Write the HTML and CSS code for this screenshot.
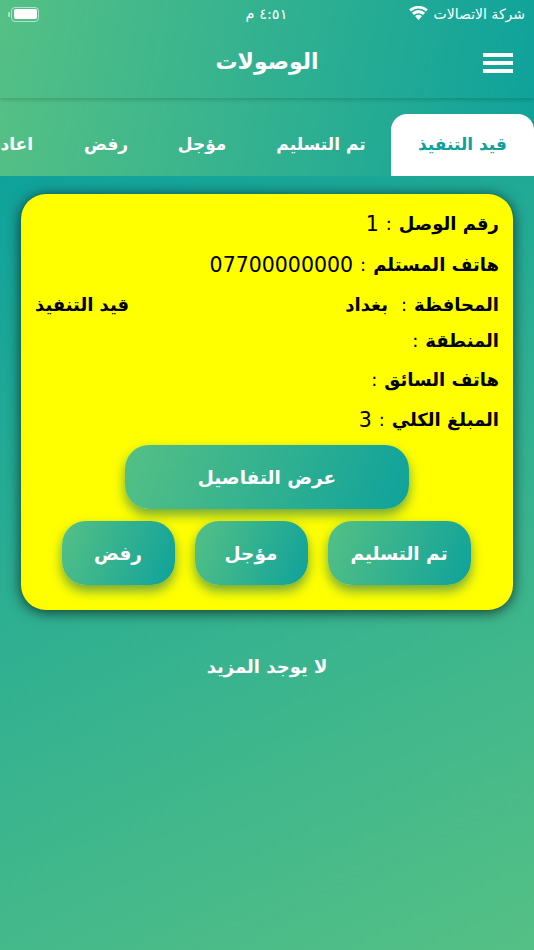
FILE: index.html
```html
<!DOCTYPE html>
<html lang="ar" dir="rtl">
<head>
<meta charset="utf-8">
<title>الوصولات</title>
<link rel="stylesheet" href="styles.css">
</head>
<body>
<div class="top">
  <div class="status">
    <div class="carrier">
      <span>شركة الاتصالات</span>
      <svg class="wifi" viewBox="0 0 20 15" width="19" height="14"><path d="M10 15 6.4 11a5 5 0 0 1 7.2 0z" fill="#fff"/><path d="M5.2 9.7 2.9 7.1a10.4 10.4 0 0 1 14.2 0l-2.3 2.6a7 7 0 0 0-9.6 0z" fill="#fff"/><path d="M1.9 5.9 0 3.6a15 15 0 0 1 20 0l-1.9 2.3a12 12 0 0 0-16.2 0z" fill="#fff"/></svg>
    </div>
    <div class="clock">٤:٥١ م</div>
    <div class="battery"><span class="cap"></span><span class="shell"><span class="level"></span></span></div>
  </div>
  <header class="bar">
    <button class="burger" aria-label="menu"><span></span><span></span><span></span></button>
    <h1>الوصولات</h1>
  </header>
</div>
<nav class="tabs">
  <a class="tab active">قيد التنفيذ</a>
  <a class="tab t2">تم التسليم</a>
  <a class="tab t3">مؤجل</a>
  <a class="tab t4">رفض</a>
  <a class="tab t5">اعادة</a>
</nav>
<main>
  <section class="card">
    <p class="row"><b>رقم الوصل</b><i>:</i><span>1</span></p>
    <p class="row"><b>هاتف المستلم</b><i>:</i><span>07700000000</span></p>
    <div class="row split"><p class="inner"><b>المحافظة</b><i>:</i><b class="thin">بغداد</b></p><b class="state">قيد التنفيذ</b></div>
    <p class="row tight"><b>المنطقة</b><i>:</i></p>
    <p class="row"><b>هاتف السائق</b><i>:</i></p>
    <p class="row"><b>المبلغ الكلي</b><i>:</i><span>3</span></p>
    <div class="actions">
      <button class="btn wide">عرض التفاصيل</button>
      <div class="trio">
        <button class="btn deliver">تم التسليم</button>
        <button class="btn small">مؤجل</button>
        <button class="btn small">رفض</button>
      </div>
    </div>
  </section>
  <p class="more">لا يوجد المزيد</p>
</main>
</body>
</html>
```
FILE: styles.css
```css
* { box-sizing: border-box; }
html, body { margin: 0; padding: 0; }
body {
  width: 534px; height: 950px; overflow: hidden;
  font-family: "DejaVu Sans", "Noto Sans", sans-serif;
  background: #0fa29b;
  color: #fff;
}
p { margin: 0; }
.top {
  height: 98px;
  background: linear-gradient(100deg, #55c085 0%, #0fa29b 100%);
  box-shadow: 0 2px 4px rgba(0,0,0,.16);
  position: relative;
}
.status {
  height: 28px; display: grid; grid-template-columns: 1fr auto 1fr; align-items: center;
  padding: 0 9px 0 8px; font-size: 14px;
}
.carrier { display: flex; align-items: center; gap: 6px; }
.wifi { display: block; margin-top: -3px; }
.clock { font-size: 14.5px; }
.battery { display: flex; align-items: center; direction: ltr; justify-self: end; }
.cap { width: 2px; height: 5px; background: rgba(255,255,255,.5); border-radius: 1px 0 0 1px; margin-right: 1px; }
.shell { width: 28px; height: 15px; border: 1.5px solid rgba(255,255,255,.55); border-radius: 4px; padding: 1.5px; display: block; }
.level { display: block; height: 100%; background: #fff; border-radius: 2px; }
.bar { height: 70px; display: flex; align-items: center; padding: 0 21px 0 0; position: relative; }
.burger {
  width: 30px; height: 20px; padding: 0; border: 0; background: none;
  display: flex; flex-direction: column; justify-content: space-between; margin-top: -1px;
}
.burger span { height: 4px; background: #fff; display: block; }
h1 { margin: 0; font-size: 22px; font-weight: 700; position: absolute; left: 0; right: 0; top: 14px; text-align: center; line-height: 40px; }
.tabs {
  height: 78px; display: flex; align-items: flex-end; overflow: hidden;
  background: linear-gradient(100deg, #55c085 0%, #0fa29b 100%);
}
.tab { flex: none; height: 62px; display: flex; align-items: center; justify-content: center; font-size: 17px; font-weight: 700; white-space: nowrap; padding-bottom: 2px; }
.active { width: 143px; background: #fff; color: #0fa29b; border-radius: 16px 16px 0 0; }
.t2 { width: 140px; }
.t3 { width: 98px; }
.t4 { width: 94px; }
.t5 { width: 59px; justify-content: flex-start; padding-right: 26px; }
main { padding: 18px 21px 0; height: 774px; background: linear-gradient(155deg, #0fa29b 0%, #55c085 100%); }
.card {
  height: 416px; background: #ff0; border-radius: 25px; color: #000;
  box-shadow: 0 2px 14px rgba(0,0,0,.7);
  padding: 10px 14px 0; font-size: 18px;
}
.row { height: 40.5px; display: flex; align-items: center; gap: 7px; line-height: 30px; }
.row i { font-style: normal; }
.row span { font-size: 20.5px; }
.split { justify-content: space-between; }
.inner { display: flex; gap: 7px; align-items: center; }
.thin { margin-right: 6px; }
.tight { height: 34px; align-items: flex-start; }
.actions { display: flex; flex-direction: column; align-items: center; }
.btn {
  height: 64px; border: 0; border-radius: 24px; color: #fff; font: 700 18.5px "DejaVu Sans", sans-serif;
  background: linear-gradient(110deg, #55c085 0%, #0fa29b 100%);
  box-shadow: 0 6px 12px rgba(20,110,100,.6); padding: 0;
}
.wide { width: 284px; margin-top: 4.5px; }
.trio { display: flex; gap: 20px; margin: 12px 2px 0 0; }
.deliver { width: 143px; }
.small { width: 113px; }
.more { margin-top: 44px; text-align: center; font-size: 18px; font-weight: 700; line-height: 26px; }
```
